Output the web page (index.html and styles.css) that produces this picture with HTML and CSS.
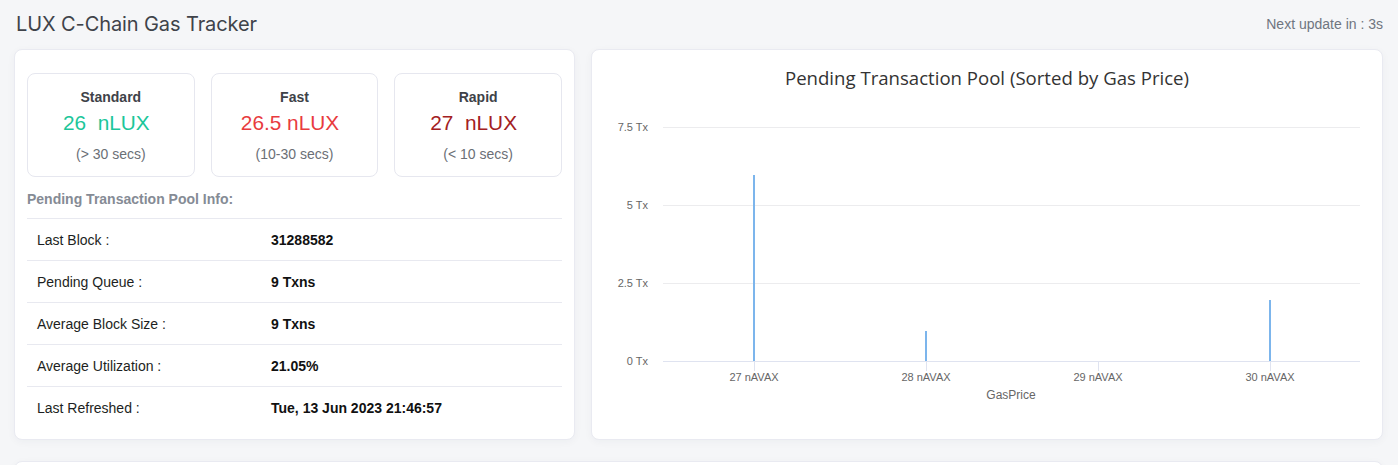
FILE: index.html
```html
<!DOCTYPE html>
<html lang="en">
<head>
<meta charset="utf-8">
<title>LUX C-Chain Gas Tracker</title>
<link rel="stylesheet" href="styles.css">
</head>
<body>
<div class="page">
  <header class="header">
    <h1 class="title">LUX C-Chain Gas Tracker</h1>
    <div class="next-update">Next update in : 3s</div>
  </header>

  <div class="main-grid">
    <section class="card info-card">
      <div class="gas-boxes">
        <div class="gas-box">
          <div class="gas-label">Standard</div>
          <div class="gas-value standard">26&nbsp; nLUX</div>
          <div class="gas-time">(&gt; 30 secs)</div>
        </div>
        <div class="gas-box">
          <div class="gas-label">Fast</div>
          <div class="gas-value fast">26.5 nLUX</div>
          <div class="gas-time">(10-30 secs)</div>
        </div>
        <div class="gas-box">
          <div class="gas-label">Rapid</div>
          <div class="gas-value rapid">27&nbsp; nLUX</div>
          <div class="gas-time">(&lt; 10 secs)</div>
        </div>
      </div>

      <h2 class="pool-heading">Pending Transaction Pool Info:</h2>
      <div class="pool-table">
        <div class="pool-row"><span class="pool-key">Last Block :</span><span class="pool-val">31288582</span></div>
        <div class="pool-row"><span class="pool-key">Pending Queue :</span><span class="pool-val">9 Txns</span></div>
        <div class="pool-row"><span class="pool-key">Average Block Size :</span><span class="pool-val">9 Txns</span></div>
        <div class="pool-row"><span class="pool-key">Average Utilization :</span><span class="pool-val">21.05%</span></div>
        <div class="pool-row"><span class="pool-key">Last Refreshed :</span><span class="pool-val">Tue, 13 Jun 2023 21:46:57</span></div>
      </div>
    </section>

    <section class="card chart-card">
      <svg class="chart" width="792" height="391" viewBox="0 0 792 391">
        <text class="chart-title" x="396" y="36" text-anchor="middle">Pending Transaction Pool (Sorted by Gas Price)</text>

        <line class="grid" x1="72" y1="78.5" x2="769" y2="78.5"/>
        <line class="grid" x1="72" y1="156.5" x2="769" y2="156.5"/>
        <line class="grid" x1="72" y1="234.5" x2="769" y2="234.5"/>

        <text class="axis-label" x="57" y="82" text-anchor="end">7.5 Tx</text>
        <text class="axis-label" x="57" y="160" text-anchor="end">5 Tx</text>
        <text class="axis-label" x="57" y="238" text-anchor="end">2.5 Tx</text>
        <text class="axis-label" x="57" y="316" text-anchor="end">0 Tx</text>

        <line class="tick" x1="163.5" y1="312" x2="163.5" y2="322"/>
        <line class="tick" x1="335.5" y1="312" x2="335.5" y2="322"/>
        <line class="tick" x1="507.5" y1="312" x2="507.5" y2="322"/>
        <line class="tick" x1="679.5" y1="312" x2="679.5" y2="322"/>

        <rect class="bar" x="162" y="126" width="2" height="186"/>
        <rect class="bar" x="334" y="282" width="2" height="30"/>
        <rect class="bar" x="678" y="251" width="2" height="61"/>

        <line class="baseline" x1="72" y1="312.5" x2="769" y2="312.5"/>

        <text class="axis-label" x="163" y="332" text-anchor="middle">27 nAVAX</text>
        <text class="axis-label" x="335" y="332" text-anchor="middle">28 nAVAX</text>
        <text class="axis-label" x="507" y="332" text-anchor="middle">29 nAVAX</text>
        <text class="axis-label" x="679" y="332" text-anchor="middle">30 nAVAX</text>

        <text class="axis-title" x="420" y="350" text-anchor="middle">GasPrice</text>
      </svg>
    </section>
  </div>

  <section class="card bottom-card"></section>
</div>
</body>
</html>
```

FILE: styles.css
```css
* {
  box-sizing: border-box;
}

html, body {
  margin: 0;
  padding: 0;
  background: #f5f6f8;
}

body {
  height: 465px;
  overflow: hidden;
  font-family: "Liberation Sans", Arial, sans-serif;
  color: #212529;
}

.page {
  padding: 0 15px 0 14px;
}

.header {
  height: 49px;
  display: flex;
  align-items: center;
  justify-content: space-between;
  padding-left: 2px;
  padding-bottom: 2px;
}

.title {
  margin: 0;
  font-family: Inter, "Liberation Sans", sans-serif;
  font-size: 20px;
  font-weight: 400;
  color: #3f434a;
  letter-spacing: -0.1px;
}

.next-update {
  font-size: 14px;
  color: #6f7580;
}

.main-grid {
  display: grid;
  grid-template-columns: 561px 1fr;
  gap: 16px;
}

.card {
  background: #ffffff;
  border: 1px solid #e9eaf1;
  border-radius: 8px;
  box-shadow: 0 2px 8px rgba(30, 40, 80, 0.04);
}

.info-card {
  height: 391px;
  padding: 23px 12px 0 12px;
}

.gas-boxes {
  display: grid;
  grid-template-columns: repeat(3, 1fr);
  gap: 16px;
}

.gas-box {
  height: 104px;
  border: 1px solid #e6e7ef;
  border-radius: 8px;
  text-align: center;
  padding-top: 13px;
}

.gas-label {
  font-size: 14px;
  line-height: 20px;
  font-weight: 700;
  color: #3e4248;
}

.gas-value {
  margin-top: 3px;
  padding-right: 9px;
  font-size: 20.8px;
  line-height: 26px;
}

.gas-value.standard {
  color: #1cc69a;
}

.gas-value.fast {
  color: #e83b3e;
}

.gas-value.rapid {
  color: #a32022;
}

.gas-time {
  margin-top: 8px;
  font-size: 14px;
  line-height: 20px;
  color: #6b6f76;
}

.pool-heading {
  margin: 12px 0 9px 0;
  font-size: 14px;
  line-height: 20px;
  font-weight: 700;
  color: #858b95;
}

.pool-row {
  display: grid;
  grid-template-columns: 244px 1fr;
  height: 42px;
  align-items: center;
  border-top: 1px solid #e8e9f0;
  padding-left: 10px;
  font-size: 14px;
}

.pool-key {
  color: #1d1f22;
}

.pool-val {
  font-weight: 700;
  color: #111;
  margin-left: -10px;
}

.chart-card {
  height: 391px;
  overflow: hidden;
}

.chart {
  display: block;
  margin: -1px 0 0 -1px;
}

.chart-title {
  font-family: "Open Sans", "Liberation Sans", Arial, sans-serif;
  font-size: 18.6px;
  fill: #333333;
}

.axis-label {
  font-family: "Liberation Sans", Arial, sans-serif;
  font-size: 11px;
  fill: #666666;
}

.axis-title {
  font-family: "Liberation Sans", Arial, sans-serif;
  font-size: 12px;
  fill: #666666;
}

.grid {
  stroke: #ececee;
  stroke-width: 1;
}

.baseline,
.tick {
  stroke: #dfe3f0;
  stroke-width: 1;
}

.bar {
  fill: #7cb5ec;
}

.bottom-card {
  margin-top: 21px;
  height: 40px;
}
```
